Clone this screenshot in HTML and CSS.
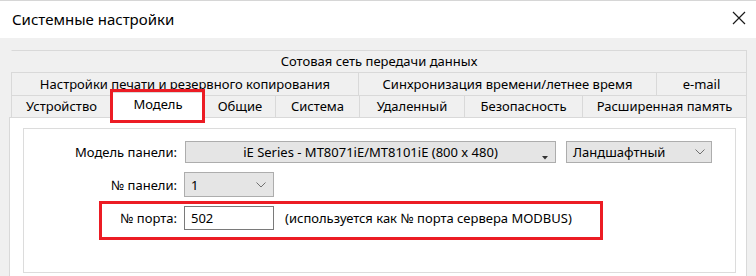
FILE: index.html
```html
<!DOCTYPE html>
<html lang="ru">
<head>
    <meta charset="UTF-8">
    <title>Системные настройки</title>
    <link rel="stylesheet" href="styles.css">
</head>
<body>
    <div class="dialog">
        <div class="titlebar">
            <span class="title">Системные настройки</span>
            <svg class="close" width="14" height="14" viewBox="0 0 14 14">
                <path d="M1 1 L13 13 M13 1 L1 13" stroke="#1a1a1a" stroke-width="1.2" fill="none"/>
            </svg>
        </div>
        <div class="body">
            <div class="tabs">
                <div class="tab-row row-1">
                    <div class="tab wide">Сотовая сеть передачи данных</div>
                </div>
                <div class="tab-row row-2">
                    <div class="tab w-print">Настройки печати и резервного копирования</div>
                    <div class="tab w-sync">Синхронизация времени/летнее время</div>
                    <div class="tab w-mail">e-mail</div>
                </div>
                <div class="tab-row row-3">
                    <div class="tab w-dev">Устройство</div>
                    <div class="tab w-model selected">Модель</div>
                    <div class="tab w-common">Общие</div>
                    <div class="tab w-sys">Система</div>
                    <div class="tab w-remote">Удаленный</div>
                    <div class="tab w-sec">Безопасность</div>
                    <div class="tab w-mem">Расширенная память</div>
                </div>
            </div>
            <div class="page">
                <div class="panel">
                    <div class="form-row first">
                        <label class="label">Модель панели:</label>
                        <div class="combo model">
                            <span class="combo-text">iE Series - MT8071iE/MT8101iE (800 x 480)</span>
                            <svg class="tri" width="6" height="4" viewBox="0 0 6 4"><path d="M0 0 H6 L3 3.5 Z" fill="#333"/></svg>
                        </div>
                        <div class="combo orient">
                            <span class="combo-text">Ландшафтный</span>
                            <svg class="chev" width="10" height="6" viewBox="0 0 10 6"><polyline points="0.5,0.5 5,5 9.5,0.5" fill="none" stroke="#707070" stroke-width="1"/></svg>
                        </div>
                    </div>
                    <div class="form-row second">
                        <label class="label">№ панели:</label>
                        <div class="combo num">
                            <span class="combo-text">1</span>
                            <svg class="chev" width="10" height="6" viewBox="0 0 10 6"><polyline points="0.5,0.5 5,5 9.5,0.5" fill="none" stroke="#707070" stroke-width="1"/></svg>
                        </div>
                    </div>
                    <div class="form-row port">
                        <label class="label">№ порта:</label>
                        <div class="input">502</div>
                        <span class="hint">(используется как № порта сервера MODBUS)</span>
                    </div>
                </div>
            </div>
        </div>
    </div>
</body>
</html>
```

FILE: styles.css
```css
* {
    box-sizing: border-box;
}
body {
    margin: 0;
    font-family: "Noto Sans", "DejaVu Sans", sans-serif;
    font-size: 13px;
    color: #000;
    background: #f0f0f0;
}
.dialog {
    width: 756px;
    height: 276px;
    overflow: hidden;
}
.titlebar {
    height: 38px;
    background: #fff;
    border-top: 1px solid #d6d6d6;
    display: flex;
    align-items: center;
    justify-content: space-between;
    padding: 0 10px 2px 12px;
}
.title {
    font-size: 15px;
}
.close {
    margin-top: -1px;
}
.body {
    background: #f0f0f0;
    padding: 12px 9px 0 9px;
}
.tabs {
    margin-left: 2px;
}
.tab-row {
    display: flex;
}
.tab {
    border-top: 1px solid #d9d9d9;
    border-left: 1px solid #d9d9d9;
    display: flex;
    align-items: center;
    justify-content: center;
    white-space: nowrap;
    padding-bottom: 1px;
}
.tab:last-child {
    border-right: 1px solid #d9d9d9;
}
.row-1 .tab {
    height: 22px;
    border-left-color: transparent;
}
.row-2 .tab {
    height: 23px;
}
.row-3 .tab {
    height: 22px;
}
.wide { flex: 1; }
.w-print { width: 347px; }
.w-sync { width: 298px; }
.w-mail { flex: 1; }
.w-dev { width: 100px; }
.w-model { width: 94px; }
.w-common { width: 70px; }
.w-sys { width: 84px; }
.w-remote { width: 105px; }
.w-sec { width: 118px; }
.w-mem { flex: 1; }
.row-3 .tab.selected {
    background: #fff;
    height: 26px;
    margin-top: -3px;
    margin-bottom: -1px;
    border-right: 1px solid #d9d9d9;
    padding-bottom: 4px;
    position: relative;
    z-index: 1;
}
.selected + .tab {
    border-left: none;
}
.selected::after {
    content: "";
    position: absolute;
    top: -4px;
    left: -2px;
    right: -1px;
    bottom: -5px;
    border: 3px solid #ec1c24;
}
.page {
    background: #fff;
    border: 1px solid #d9d9d9;
    height: 170px;
    padding: 10px 10px 0 13px;
}
.panel {
    border: 1px solid #dcdcdc;
    height: 145px;
    padding-top: 12px;
}
.form-row {
    display: flex;
    align-items: center;
}
.label {
    width: 153px;
    text-align: right;
    flex-shrink: 0;
}
.combo {
    background: #e5e5e5;
    border: 1px solid #adadad;
    display: flex;
    align-items: center;
    position: relative;
}
.model {
    margin-left: 8px;
    width: 371px;
    height: 22px;
    justify-content: center;
}
.model .tri {
    position: absolute;
    right: 7px;
    top: 14px;
}
.orient {
    margin-left: 10px;
    width: 146px;
    height: 22px;
    justify-content: space-between;
    padding: 0 6px 0 6px;
}
.second {
    margin-top: 9px;
}
.num {
    margin-left: 7px;
    width: 90px;
    height: 25px;
    justify-content: space-between;
    padding: 0 7px 0 6px;
}
.port {
    margin-top: 4px;
    margin-left: 75px;
    width: 504px;
    border: 3px solid #ec1c24;
    padding: 2px 0 7px 0;
}
.port .label {
    width: 75px;
}
.input {
    margin-left: 7px;
    width: 90px;
    height: 24px;
    border: 1px solid #7a7a7a;
    background: #fff;
    padding-left: 6px;
    display: flex;
    align-items: center;
}
.hint {
    margin-left: 11px;
}
```
